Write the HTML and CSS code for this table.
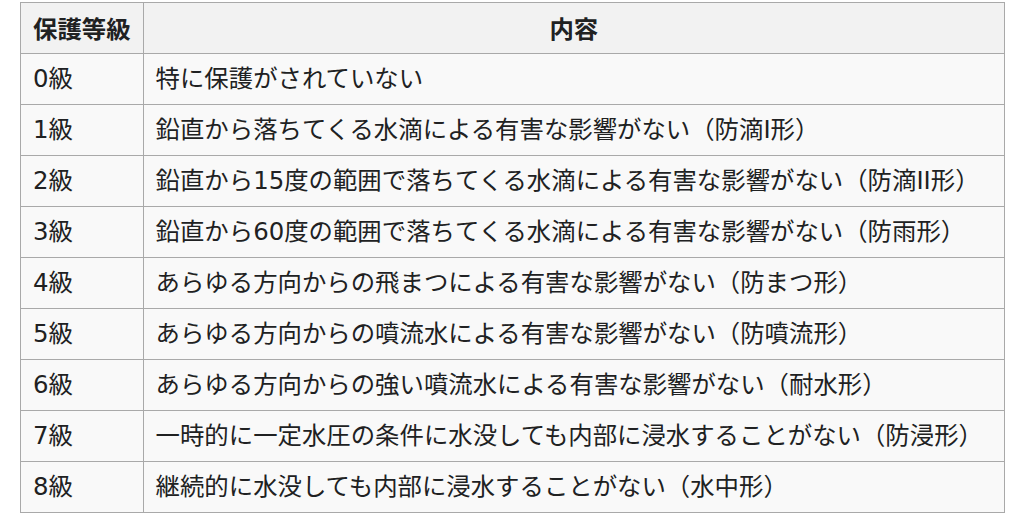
FILE: index.html
```html
<!DOCTYPE html>
<html lang="ja">
<head>
<meta charset="utf-8">
<link rel="stylesheet" href="styles.css">
</head>
<body>
<table class="grade-table">
<thead>
<tr><th class="col-grade">保護等級</th><th class="col-desc">内容</th></tr>
</thead>
<tbody>
<tr><td>0級</td><td>特に保護がされていない</td></tr>
<tr><td>1級</td><td>鉛直から落ちてくる水滴による有害な影響がない（防滴I形）</td></tr>
<tr><td>2級</td><td>鉛直から15度の範囲で落ちてくる水滴による有害な影響がない（防滴II形）</td></tr>
<tr><td>3級</td><td>鉛直から60度の範囲で落ちてくる水滴による有害な影響がない（防雨形）</td></tr>
<tr><td>4級</td><td>あらゆる方向からの飛まつによる有害な影響がない（防まつ形）</td></tr>
<tr><td>5級</td><td>あらゆる方向からの噴流水による有害な影響がない（防噴流形）</td></tr>
<tr><td>6級</td><td>あらゆる方向からの強い噴流水による有害な影響がない（耐水形）</td></tr>
<tr><td>7級</td><td>一時的に一定水圧の条件に水没しても内部に浸水することがない（防浸形）</td></tr>
<tr><td>8級</td><td>継続的に水没しても内部に浸水することがない（水中形）</td></tr>
</tbody>
</table>
</body>
</html>
```
FILE: styles.css
```css
html, body {
  margin: 0;
  padding: 0;
  background: #ffffff;
}
body {
  padding: 2px 0 0 20px;
  font-family: "DejaVu Sans", "Noto Sans CJK JP", sans-serif;
  color: #202122;
}
.grade-table {
  border-collapse: collapse;
  width: 985px;
  background: #f9f9f9;
  font-size: 24.4px;
}
.grade-table th,
.grade-table td {
  border: 1px solid #a9a9a9;
  height: 51px;
  padding: 0 12px;
  line-height: 30px;
  box-sizing: border-box;
  text-align: left;
  vertical-align: middle;
  white-space: nowrap;
}
.grade-table th {
  background: #f2f2f2;
  font-weight: bold;
  font-family: "Noto Sans CJK JP", sans-serif;
}
.grade-table .col-grade {
  width: 122px;
}
.grade-table .col-desc {
  text-align: center;
}
```
